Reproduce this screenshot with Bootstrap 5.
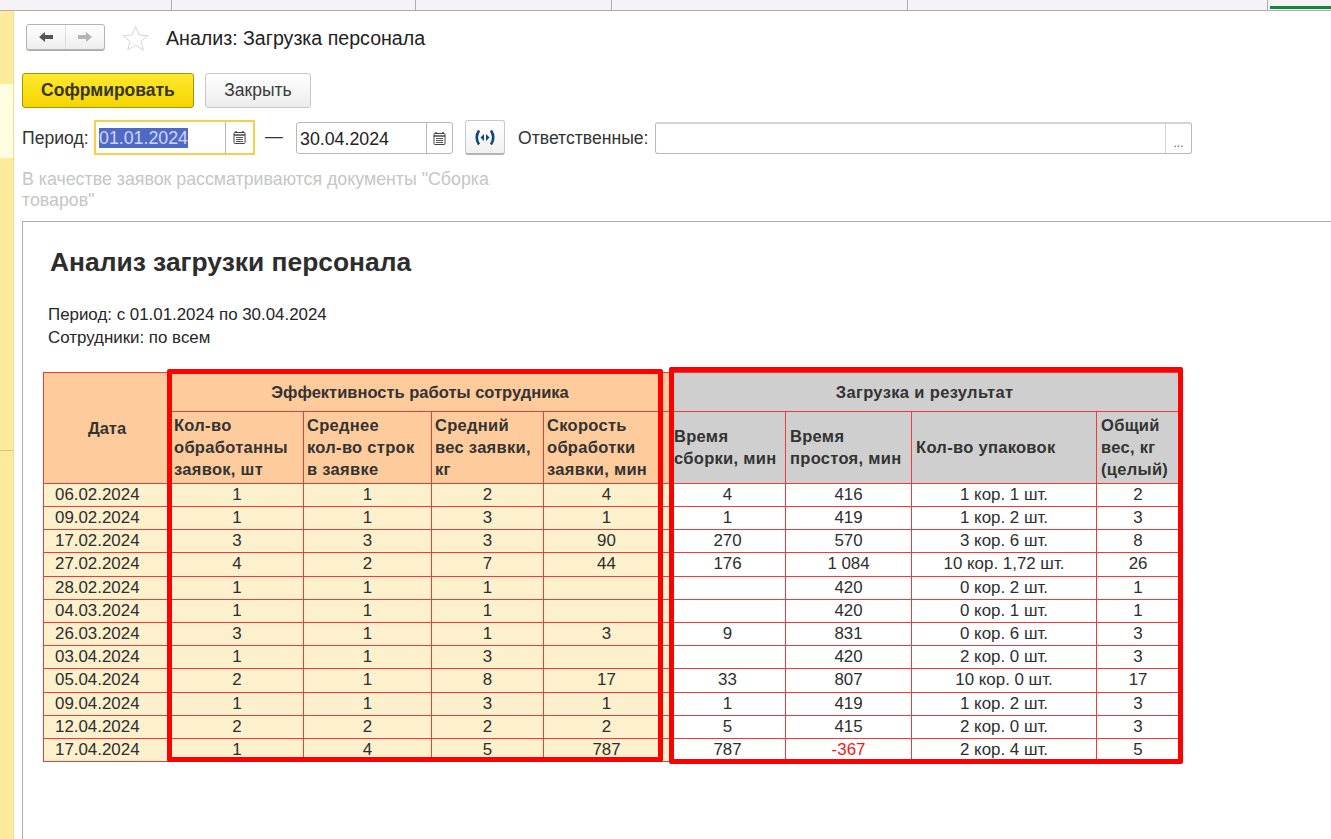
<!DOCTYPE html>
<html lang="ru">
<head>
<meta charset="utf-8">
<title>Анализ: Загрузка персонала</title>
<link href="https://cdn.jsdelivr.net/npm/bootstrap@5.3.0/dist/css/bootstrap.min.css" rel="stylesheet">
<style>
html,body{height:839px;overflow:hidden;background:#fff}
body{font-family:"Liberation Sans",Arial,sans-serif;color:#2b2b2b;font-size:17.8px}
.tabstrip{height:11px;background:#f6f2f6;border-bottom:1px solid #aeaeae}
.tabcell{border-right:1px solid #aeaeae;height:10px}
.tc1{width:172px}.tc2{width:244px}.tc3{width:196px}.tc4{width:296px}.tc5{width:360px}
.tabactive{margin-left:2px;flex:1;height:3px;background:#0e8a34;margin-top:6px}
.shell{height:828px}
.sidebar{width:14px;background:#fdeb9b;border-right:1px solid #f0dc8c;flex:none}
.sb1{height:73px}
.sb2{height:74px;background:#fffde0}
.sb3{height:293px;border-bottom:1px solid #d9c770}
.mainpane{padding-left:8px;flex:1;min-width:0}
.headrow{height:47px;padding-top:13px;padding-left:4px}
.navgroup{width:79px;height:26px;border:1px solid #b4b4b4;border-radius:3px;background:linear-gradient(#fff,#eee);box-shadow:0 1px 0 #aaa}
.navgroup>span{flex:1;height:100%}
.navgroup>span:first-child{border-right:1px solid #ddd}
.formtitle{font-size:19.6px;color:#222;margin-left:17px;line-height:28px}
.star{margin-left:17px;margin-top:1px}
.actions{margin-top:15px;height:35px;gap:11px}
.btn-make,.btn-close-form{height:35px;border-radius:3px;font-size:17.5px;padding:0;line-height:33px}
.btn-make{width:172px;background:linear-gradient(#ffe92e,#f4d500);border:1px solid #a89400;font-weight:700;color:#37352a}
.btn-close-form{width:106px;background:linear-gradient(#fff,#ececec);border:1px solid #c8c8c8;color:#3a3a3a}
.filterrow{margin-top:11px;height:37px;color:#333}
.flabel{line-height:38px;font-size:17.6px}
.periodlabel{width:72px}
.datefield{height:32px;border:1px solid #b9b9b9;border-radius:3px;background:#fff;margin-top:3px}
.df1{width:161px;height:35px;margin-top:1px;border:2px solid #f9cf4a;border-radius:0}
.df2{width:157px}
.datefield .val{flex:1;padding-left:3px;line-height:32px;color:#222;border-right:1px solid #b9b9b9}
.df1 .val{line-height:33px;padding-left:3px}
.selected{background:#4f69c6;color:#cfd6f2}
.datefield .cal{width:25px}
.df1 .cal{width:27px}
.dash{margin-left:10px;line-height:35px;width:31px}
.periodbtn{width:40px;height:35px;margin-left:12px;margin-top:1px;border:1px solid #c8c8c8;border-bottom:2px solid #b4b4b4;border-radius:3px;background:linear-gradient(#fff,#f1f1f1)}
.resplabel{margin-left:13px;width:137px}
.respfield{width:537px;height:32px;margin-top:3px;border:1px solid #b9b9b9;border-top:2px solid #d4d4d4;border-radius:3px}
.respfield .val{flex:1;border-right:1px solid #d4d4d4}
.respfield .dots{width:25px;text-align:center;font-size:12px;line-height:38px;color:#555}
.hint{color:#c6c6c6;width:480px;line-height:21px;margin-top:13px;height:52px}
.reportbox{margin-top:0;border-left:1px solid #aeaeae;border-top:1px solid #aeaeae;flex:1;padding-left:27px;position:relative;height:620px}
.rtitle{font-size:26.4px;font-weight:700;margin:0;padding-top:25px;line-height:30px;color:#2d2d2d}
.rmeta{margin-top:26px;margin-left:-2px;line-height:23px;font-size:16.9px;color:#262626}
.rwrap{margin-left:-7px;margin-top:23px;position:relative;width:1136px}
.rtable{table-layout:fixed;border-collapse:collapse;width:1136px;margin:0;font-size:16.9px;line-height:22px;--bs-table-bg:transparent}
.rtable td,.rtable th{border:1px solid #f23a3a;padding:0;height:23px;text-align:center;font-weight:400;color:#2e2e2e;white-space:nowrap;overflow:hidden}
.rtable thead th{font-weight:700;background:#fecb9c;color:#333;vertical-align:middle}
.rtable thead th.gr{background:#cfcfcf}
.rtable thead .toph{height:39px;font-size:16.5px}
.rtable thead .toph.gr{letter-spacing:.35px}
.rtable thead .subh{height:72px;text-align:left;padding:0 0 2px 3px;line-height:22px;font-size:16.5px;letter-spacing:.3px;white-space:normal}
.rtable thead .subh.gr{padding-left:4px}
.rtable td.ye{background:#fdf0cd}
.rtable td.datecell{text-align:left;padding-left:11px}
.rtable .neg{color:#f31818}
.rtable tr.tallrow td{height:24px}
.rtable thead th.dateh{vertical-align:top;padding-top:44px;text-align:center;font-size:16.5px}
.frame{position:absolute;border:5px solid #fe0000;border-radius:2px;pointer-events:none}
.fr1{left:124px;top:-3px;width:496px;height:393px}
.fr2{left:626px;top:-5px;width:514px;height:397px}
</style>
</head>
<body>
<div class="tabstrip d-flex">
  <div class="tabcell tc1"></div><div class="tabcell tc2"></div><div class="tabcell tc3"></div><div class="tabcell tc4"></div><div class="tabcell tc5"></div><div class="tabactive"></div>
</div>
<div class="shell d-flex">
  <div class="sidebar"><div class="sb1"></div><div class="sb2"></div><div class="sb3"></div></div>
  <div class="mainpane d-flex flex-column">
    <div class="headrow d-flex align-items-start">
      <div class="navgroup d-flex">
        <span class="d-flex align-items-center justify-content-center"><svg width="16" height="12" viewBox="0 0 16 12"><path d="M1 6 7 1v3h8v4H7v3z" fill="#555"/></svg></span>
        <span class="d-flex align-items-center justify-content-center"><svg width="16" height="12" viewBox="0 0 16 12"><path d="M15 6 9 1v3H1v4h8v3z" fill="#b4b4b4"/></svg></span>
      </div>
      <svg class="star" width="27" height="26" viewBox="0 0 27 26"><path d="M13.5 1.5 17 10l9 .6-7 5.7 2.3 8.7-7.8-4.8L5.700 25 8 16.300l-7-5.700 9-.6z" fill="#fff" stroke="#d6d6d6"/></svg>
      <div class="formtitle">Анализ: Загрузка персонала</div>
    </div>
    <div class="actions d-flex">
      <button type="button" class="btn btn-make">Софрмировать</button>
      <button type="button" class="btn btn-close-form">Закрыть</button>
    </div>
    <div class="filterrow d-flex">
      <span class="flabel periodlabel">Период:</span>
      <div class="datefield df1 d-flex">
        <div class="val"><span class="selected">01.01.2024</span></div>
        <div class="cal d-flex align-items-center justify-content-center"><svg width="13" height="13" viewBox="0 0 13 13"><path d="M3 0v2M10 0v2" stroke="#444" stroke-width="1.500"/><rect x="1" y="1.500" width="11" height="11" rx="1" fill="#fff" stroke="#444"/><path d="M1 4h11" stroke="#444" stroke-width="1.500"/><path d="M3 6.500h7M3 8.500h7M3 10.500h7" stroke="#555"/></svg></div>
      </div>
      <span class="dash">—</span>
      <div class="datefield df2 d-flex">
        <div class="val">30.04.2024</div>
        <div class="cal d-flex align-items-center justify-content-center"><svg width="13" height="13" viewBox="0 0 13 13"><path d="M3 0v2M10 0v2" stroke="#444" stroke-width="1.500"/><rect x="1" y="1.500" width="11" height="11" rx="1" fill="#fff" stroke="#444"/><path d="M1 4h11" stroke="#444" stroke-width="1.500"/><path d="M3 6.500h7M3 8.500h7M3 10.500h7" stroke="#555"/></svg></div>
      </div>
      <div class="periodbtn d-flex align-items-center justify-content-center"><svg width="24" height="17" viewBox="0 0 24 17"><path d="M6 1.500Q1.500 8.500 6 15.500M18 1.500q4.500 7 0 14" fill="none" stroke="#12476f" stroke-width="2.600"/><path d="M11 5 7.500 8.500 11 12zM13 5l3.500 3.500L13 12z" fill="#12476f"/></svg></div>
      <span class="flabel resplabel">Ответственные:</span>
      <div class="respfield d-flex"><div class="val"></div><div class="dots">...</div></div>
    </div>
    <div class="hint">В качестве заявок рассматриваются документы "Сборка товаров"</div>
    <div class="reportbox">
      <h1 class="rtitle">Анализ загрузки персонала</h1>
      <div class="rmeta">Период: с 01.01.2024 по 30.04.2024<br>Сотрудники: по всем</div>
      <div class="rwrap">
        <table class="table rtable">
          <colgroup>
            <col style="width:127px"><col style="width:133px"><col style="width:128px"><col style="width:112px"><col style="width:126px"><col style="width:116px"><col style="width:126px"><col style="width:185px"><col style="width:83px">
          </colgroup>
          <thead>
            <tr>
              <th class="dateh" rowspan="2">Дата</th>
              <th class="toph" colspan="4">Эффективность работы сотрудника</th>
              <th class="toph gr" colspan="4">Загрузка и результат</th>
            </tr>
            <tr>
              <th class="subh">Кол-во<br>обработанны<br>заявок, шт</th>
              <th class="subh">Среднее<br>кол-во строк<br>в заявке</th>
              <th class="subh">Средний<br>вес заявки,<br>кг</th>
              <th class="subh">Скорость<br>обработки<br>заявки, мин</th>
              <th class="subh gr">Время<br>сборки, мин</th>
              <th class="subh gr">Время<br>простоя, мин</th>
              <th class="subh gr">Кол-во упаковок</th>
              <th class="subh gr">Общий<br>вес, кг<br>(целый)</th>
            </tr>
          </thead>
          <tbody>
            <tr><td class="ye datecell">06.02.2024</td><td class="ye">1</td><td class="ye">1</td><td class="ye">2</td><td class="ye">4</td><td>4</td><td>416</td><td>1 кор. 1 шт.</td><td>2</td></tr>
            <tr><td class="ye datecell">09.02.2024</td><td class="ye">1</td><td class="ye">1</td><td class="ye">3</td><td class="ye">1</td><td>1</td><td>419</td><td>1 кор. 2 шт.</td><td>3</td></tr>
            <tr><td class="ye datecell">17.02.2024</td><td class="ye">3</td><td class="ye">3</td><td class="ye">3</td><td class="ye">90</td><td>270</td><td>570</td><td>3 кор. 6 шт.</td><td>8</td></tr>
            <tr class="tallrow"><td class="ye datecell">27.02.2024</td><td class="ye">4</td><td class="ye">2</td><td class="ye">7</td><td class="ye">44</td><td>176</td><td>1 084</td><td>10 кор. 1,72 шт.</td><td>26</td></tr>
            <tr><td class="ye datecell">28.02.2024</td><td class="ye">1</td><td class="ye">1</td><td class="ye">1</td><td class="ye"></td><td></td><td>420</td><td>0 кор. 2 шт.</td><td>1</td></tr>
            <tr><td class="ye datecell">04.03.2024</td><td class="ye">1</td><td class="ye">1</td><td class="ye">1</td><td class="ye"></td><td></td><td>420</td><td>0 кор. 1 шт.</td><td>1</td></tr>
            <tr><td class="ye datecell">26.03.2024</td><td class="ye">3</td><td class="ye">1</td><td class="ye">1</td><td class="ye">3</td><td>9</td><td>831</td><td>0 кор. 6 шт.</td><td>3</td></tr>
            <tr><td class="ye datecell">03.04.2024</td><td class="ye">1</td><td class="ye">1</td><td class="ye">3</td><td class="ye"></td><td></td><td>420</td><td>2 кор. 0 шт.</td><td>3</td></tr>
            <tr class="tallrow"><td class="ye datecell">05.04.2024</td><td class="ye">2</td><td class="ye">1</td><td class="ye">8</td><td class="ye">17</td><td>33</td><td>807</td><td>10 кор. 0 шт.</td><td>17</td></tr>
            <tr><td class="ye datecell">09.04.2024</td><td class="ye">1</td><td class="ye">1</td><td class="ye">3</td><td class="ye">1</td><td>1</td><td>419</td><td>1 кор. 2 шт.</td><td>3</td></tr>
            <tr><td class="ye datecell">12.04.2024</td><td class="ye">2</td><td class="ye">2</td><td class="ye">2</td><td class="ye">2</td><td>5</td><td>415</td><td>2 кор. 0 шт.</td><td>3</td></tr>
            <tr><td class="ye datecell">17.04.2024</td><td class="ye">1</td><td class="ye">4</td><td class="ye">5</td><td class="ye">787</td><td>787</td><td class="neg">-367</td><td>2 кор. 4 шт.</td><td>5</td></tr>
          </tbody>
        </table>
        <div class="frame fr1"></div>
        <div class="frame fr2"></div>
      </div>
    </div>
  </div>
</div>
<script src="https://cdn.jsdelivr.net/npm/bootstrap@5.3.0/dist/js/bootstrap.bundle.min.js"></script>
</body>
</html>
